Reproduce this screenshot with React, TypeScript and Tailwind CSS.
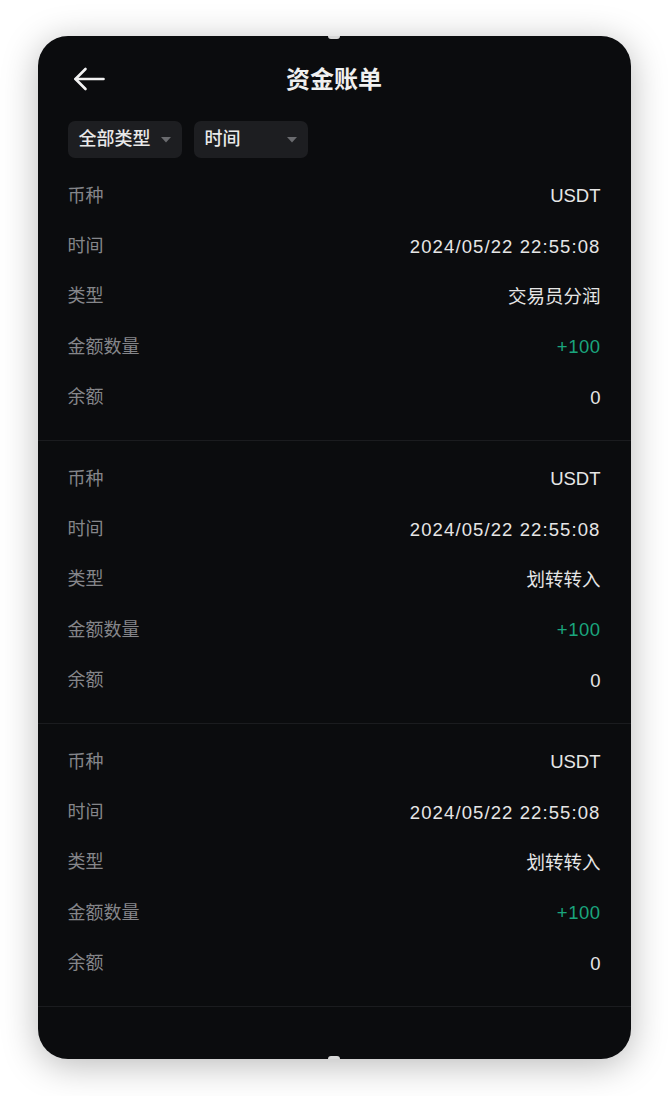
import React from "react";

const FONT = { fontFamily: '"Liberation Sans", "Noto Sans CJK SC", sans-serif' };

type Row = { label: string; value: string; green?: boolean; wide?: boolean };

const make = (type: string): Row[] => [
  { label: "币种", value: "USDT" },
  { label: "时间", value: "2024/05/22 22:55:08", wide: true },
  { label: "类型", value: type },
  { label: "金额数量", value: "+100", green: true },
  { label: "余额", value: "0" },
];

const records: Row[][] = [make("交易员分润"), make("划转转入"), make("划转转入")];

function Caret() {
  return (
    <svg width="10" height="6" viewBox="0 0 10 6">
      <path d="M0 0 L10 0 L5 5.5 Z" fill="#6a6b6f" />
    </svg>
  );
}

function Filter({ text }: { text: string }) {
  return (
    <div className="flex h-[37px] w-[114px] items-center justify-between rounded-[7px] bg-[#1d1e21] pl-[11px] pr-[11px]">
      <span className="text-[18px] font-medium text-[#e9e9e9]">{text}</span>
      <Caret />
    </div>
  );
}

export default function App() {
  return (
    <div className="flex min-h-[1096px] w-full justify-center bg-white pt-[36px]" style={FONT}>
      <div className="relative flex h-[1023px] w-[593px] flex-col overflow-hidden rounded-[30px] bg-[#0b0c0e] shadow-[0_6px_36px_rgba(0,0,0,0.28)]">
        <div className="absolute left-1/2 top-0 h-[3px] w-[12px] -translate-x-1/2 rounded-b-full bg-[#d8d8d8]" />
        <div className="absolute bottom-0 left-1/2 h-[3px] w-[12px] -translate-x-1/2 rounded-t-full bg-[#d8d8d8]" />
        {/* Header */}
        <div className="relative flex h-[85px] items-center justify-center">
          <svg
            className="absolute left-[35px] top-[31px]"
            width="32"
            height="24"
            viewBox="0 0 32 24"
            fill="none"
            stroke="#f2f2f2"
            strokeWidth="2.6"
            strokeLinecap="round"
            strokeLinejoin="round"
          >
            <path d="M30.5 12 H2.5" />
            <path d="M12.5 2 L2.5 12 L12.5 22" />
          </svg>
          <span className="mt-[2px] text-[24px] font-semibold text-[#f0f0f0]">资金账单</span>
        </div>
        {/* Filters */}
        <div className="flex h-[37px] gap-[12px] px-[30px]">
          <Filter text="全部类型" />
          <Filter text="时间" />
        </div>
        {/* Records */}
        {records.map((rows, i) => (
          <div key={i} className="border-b border-[#1b1c1f] px-[30px] pt-[13px] pb-[17px]">
            {rows.map((r) => (
              <div key={r.label} className="flex h-[50.4px] items-center justify-between">
                <span className="text-[18px] text-[#85868a]">{r.label}</span>
                <span
                  className={
                    "text-[18.5px] " +
                    (r.green ? "text-[#1aa57d] tracking-[0.5px]" : "text-[#e6e6e6]") +
                    (r.wide ? " tracking-[1.1px]" : "")
                  }
                >
                  {r.value}
                </span>
              </div>
            ))}
          </div>
        ))}
      </div>
    </div>
  );
}
